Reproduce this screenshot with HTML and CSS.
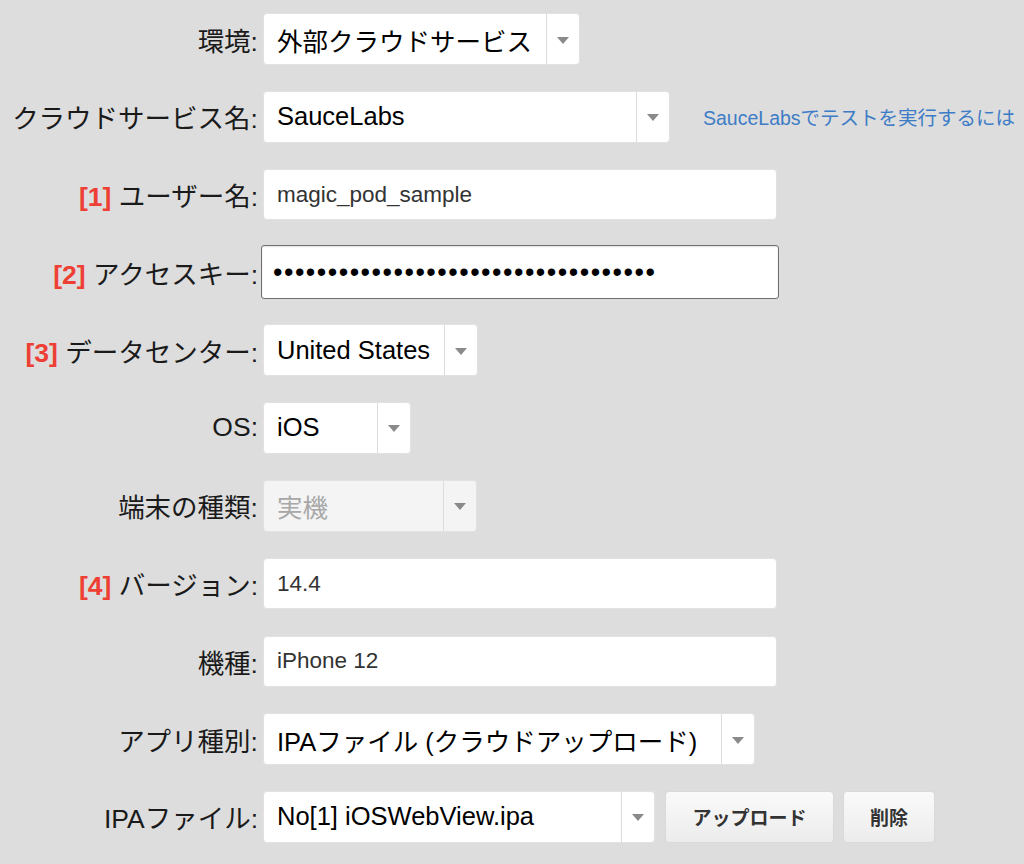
FILE: index.html
```html
<!DOCTYPE html>
<html lang="ja">
<head>
<meta charset="utf-8">
<title>環境設定</title>
<link rel="stylesheet" href="styles.css">
</head>
<body>
<div class="form">
  <div class="label">環境:</div>
  <div class="field">
    <div class="select w-env"><span class="value">外部クラウドサービス</span><span class="arrow"></span></div>
  </div>

  <div class="label">クラウドサービス名:</div>
  <div class="field">
    <div class="select w-cloud"><span class="value">SauceLabs</span><span class="arrow"></span></div>
    <a class="help" href="#">SauceLabsでテストを実行するには</a>
  </div>

  <div class="label"><span class="num">[1]</span> ユーザー名:</div>
  <div class="field">
    <div class="input"><span class="text">magic_pod_sample</span></div>
  </div>

  <div class="label"><span class="num">[2]</span> アクセスキー:</div>
  <div class="field">
    <div class="input focused"><span class="dots">•••••••••••••••••••••••••••••••••••</span></div>
  </div>

  <div class="label"><span class="num">[3]</span> データセンター:</div>
  <div class="field">
    <div class="select w-dc"><span class="value">United States</span><span class="arrow"></span></div>
  </div>

  <div class="label">OS:</div>
  <div class="field">
    <div class="select w-os"><span class="value">iOS</span><span class="arrow"></span></div>
  </div>

  <div class="label">端末の種類:</div>
  <div class="field">
    <div class="select w-dev disabled"><span class="value">実機</span><span class="arrow"></span></div>
  </div>

  <div class="label"><span class="num">[4]</span> バージョン:</div>
  <div class="field">
    <div class="input"><span class="text">14.4</span></div>
  </div>

  <div class="label">機種:</div>
  <div class="field">
    <div class="input"><span class="text">iPhone 12</span></div>
  </div>

  <div class="label">アプリ種別:</div>
  <div class="field">
    <div class="select w-app"><span class="value">IPAファイル (クラウドアップロード)</span><span class="arrow"></span></div>
  </div>

  <div class="label">IPAファイル:</div>
  <div class="field">
    <div class="select w-ipa"><span class="value">No[1] iOSWebView.ipa</span><span class="arrow"></span></div>
    <div class="buttons">
      <button class="btn btn-upload" type="button">アップロード</button>
      <button class="btn btn-delete" type="button">削除</button>
    </div>
  </div>
</div>
</body>
</html>
```

FILE: styles.css
```css
html, body {
  margin: 0;
  padding: 0;
  background: #dddddd;
}

body {
  font-family: "Liberation Sans", Arial, "Noto Sans CJK JP", sans-serif;
  color: #111;
}

.form {
  display: grid;
  grid-template-columns: 258px 1fr;
  column-gap: 5px;
  row-gap: 25.8px;
  padding-top: 13px;
}

.label {
  text-align: right;
  align-self: center;
  font-size: 26.5px;
  white-space: nowrap;
  color: #1a1a1a;
}

.num {
  color: #ee3f35;
  font-weight: bold;
}

.field {
  display: flex;
  align-items: center;
  height: 52px;
}

.select {
  display: flex;
  height: 52px;
  box-sizing: border-box;
  background: #fff;
  border: 1px solid #e2e2e2;
  border-radius: 4px;
  font-size: 25.5px;
  color: #000;
}

.select .value {
  flex: 1;
  display: flex;
  align-items: center;
  padding-left: 13px;
  white-space: nowrap;
  overflow: hidden;
}

.select .arrow {
  width: 32px;
  border-left: 1px solid #dcdcdc;
  display: flex;
  align-items: center;
  justify-content: center;
}

.select .arrow::before {
  content: "";
  display: block;
  width: 0;
  height: 0;
  margin-top: 2px;
  border-left: 6.5px solid transparent;
  border-right: 6.5px solid transparent;
  border-top: 7px solid #8a8a8a;
}

.select.disabled {
  background: #f4f4f4;
  color: #a8a8a8;
}

.w-env { width: 317px; }
.w-cloud { width: 407px; }
.w-dc { width: 215px; }
.w-os { width: 148px; }
.w-dev { width: 214px; }
.w-app { width: 492px; }
.w-ipa { width: 392px; }

.help {
  margin-left: 33px;
  font-size: 19.5px;
  color: #3d7cc6;
  text-decoration: none;
  white-space: nowrap;
}

.input {
  width: 514px;
  height: 51px;
  box-sizing: border-box;
  background: #fff;
  border: 1px solid #e2e2e2;
  border-radius: 4px;
  display: flex;
  align-items: center;
  padding-left: 13px;
  font-size: 22.5px;
  color: #333;
}

.input.focused {
  width: 518px;
  height: 54px;
  margin-left: -2px;
  padding-left: 11px;
  border: 1px solid #6e6e6e;
  border-radius: 3px;
  box-shadow: inset 0 1px 2px rgba(0, 0, 0, 0.12);
}

.dots {
  font-size: 27px;
  letter-spacing: 1.5px;
  color: #000;
  line-height: 1;
}

.buttons {
  display: flex;
  gap: 9px;
  margin-left: 10px;
}

.btn {
  height: 52px;
  box-sizing: border-box;
  border: 1px solid #d9d9d9;
  border-radius: 4px;
  background: linear-gradient(#fafafa, #ececec);
  font-family: "Liberation Sans", Arial, "Noto Sans CJK JP", sans-serif;
  font-weight: bold;
  font-size: 19px;
  color: #333;
  padding: 0;
  cursor: pointer;
}

.btn-upload { width: 169px; }
.btn-delete { width: 92px; }
```
